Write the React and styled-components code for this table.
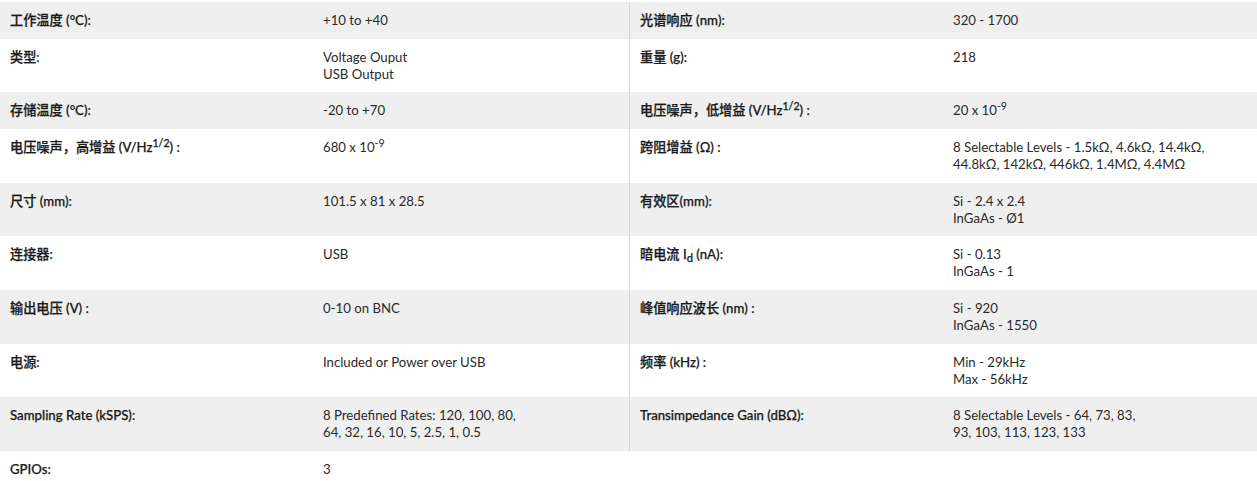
import React from "react";
import styled, { createGlobalStyle } from "styled-components";

const GlobalStyle = createGlobalStyle`
  body {
    margin: 0;
    background: #ffffff;
    font-family: Lato, "Noto Sans CJK SC", sans-serif;
    color: #1e1e1e;
  }
`;

const Table = styled.div`
  display: grid;
  padding-top: 2px;
  width: 1257px;
`;

const Row = styled.div`
  display: grid;
  grid-template-columns: 629px 628px;
  background: ${({ $shaded }) => ($shaded ? "#efefef" : "#ffffff")};
`;

const Half = styled.div`
  display: grid;
  grid-template-columns: 313px 1fr;
  padding: 10px 9px 9.67px;
  border-left: 1px solid ${({ $divided }) => ($divided ? "#d6d6d6" : "transparent")};
  padding-left: ${({ $divided }) => ($divided ? "10px" : "9px")};
  font-size: 13.2px;
  line-height: 17px;
`;

const Label = styled.div`
  font-weight: 500;
  color: #1a1a1a;
  -webkit-text-stroke: 0.25px #1a1a1a;
`;

const Value = styled.div`
  font-weight: 400;
  color: #2a2a2a;
`;

const Sup = styled.sup`
  font-size: 0.8em;
  line-height: 0;
  vertical-align: 0.5em;
`;

const Sub = styled.sub`
  font-size: 0.85em;
  line-height: 0;
  vertical-align: -0.3em;
`;

const rows = [
  {
    left: ["工作温度 (°C):", "+10 to +40"],
    right: ["光谱响应 (nm):", "320 - 1700"],
  },
  {
    left: ["类型:", <>Voltage Ouput<br />USB Output</>],
    right: ["重量 (g):", "218"],
  },
  {
    left: ["存储温度 (°C):", "-20 to +70"],
    right: [
      <>电压噪声，低增益 (V/Hz<Sup>1/2</Sup>) :</>,
      <>20 x 10<Sup>-9</Sup></>,
    ],
  },
  {
    left: [
      <>电压噪声，高增益 (V/Hz<Sup>1/2</Sup>) :</>,
      <>680 x 10<Sup>-9</Sup></>,
    ],
    right: [
      "跨阻增益 (Ω) :",
      <>8 Selectable Levels - 1.5kΩ, 4.6kΩ, 14.4kΩ,<br />44.8kΩ, 142kΩ, 446kΩ, 1.4MΩ, 4.4MΩ</>,
    ],
  },
  {
    left: ["尺寸 (mm):", "101.5 x 81 x 28.5"],
    right: ["有效区(mm):", <>Si - 2.4 x 2.4<br />InGaAs - Ø1</>],
  },
  {
    left: ["连接器:", "USB"],
    right: [<>暗电流 I<Sub>d</Sub> (nA):</>, <>Si - 0.13<br />InGaAs - 1</>],
  },
  {
    left: ["输出电压 (V) :", "0-10 on BNC"],
    right: ["峰值响应波长 (nm) :", <>Si - 920<br />InGaAs - 1550</>],
  },
  {
    left: ["电源:", "Included or Power over USB"],
    right: ["频率 (kHz) :", <>Min - 29kHz<br />Max - 56kHz</>],
  },
  {
    left: [
      "Sampling Rate (kSPS):",
      <>8 Predefined Rates: 120, 100, 80,<br />64, 32, 16, 10, 5, 2.5, 1, 0.5</>,
    ],
    right: [
      "Transimpedance Gain (dBΩ):",
      <>8 Selectable Levels - 64, 73, 83,<br />93, 103, 113, 123, 133</>,
    ],
  },
  {
    left: ["GPIOs:", "3"],
    right: null,
  },
];

const SpecHalf = ({ spec, divided }) => (
  <Half $divided={divided}>
    {spec && (
      <>
        <Label>{spec[0]}</Label>
        <Value>{spec[1]}</Value>
      </>
    )}
  </Half>
);

export default function App() {
  return (
    <>
      <GlobalStyle />
      <Table>
        {rows.map((row, i) => (
          <Row key={i} $shaded={i % 2 === 0}>
            <SpecHalf spec={row.left} />
            <SpecHalf spec={row.right} divided={!!row.right} />
          </Row>
        ))}
      </Table>
    </>
  );
}
